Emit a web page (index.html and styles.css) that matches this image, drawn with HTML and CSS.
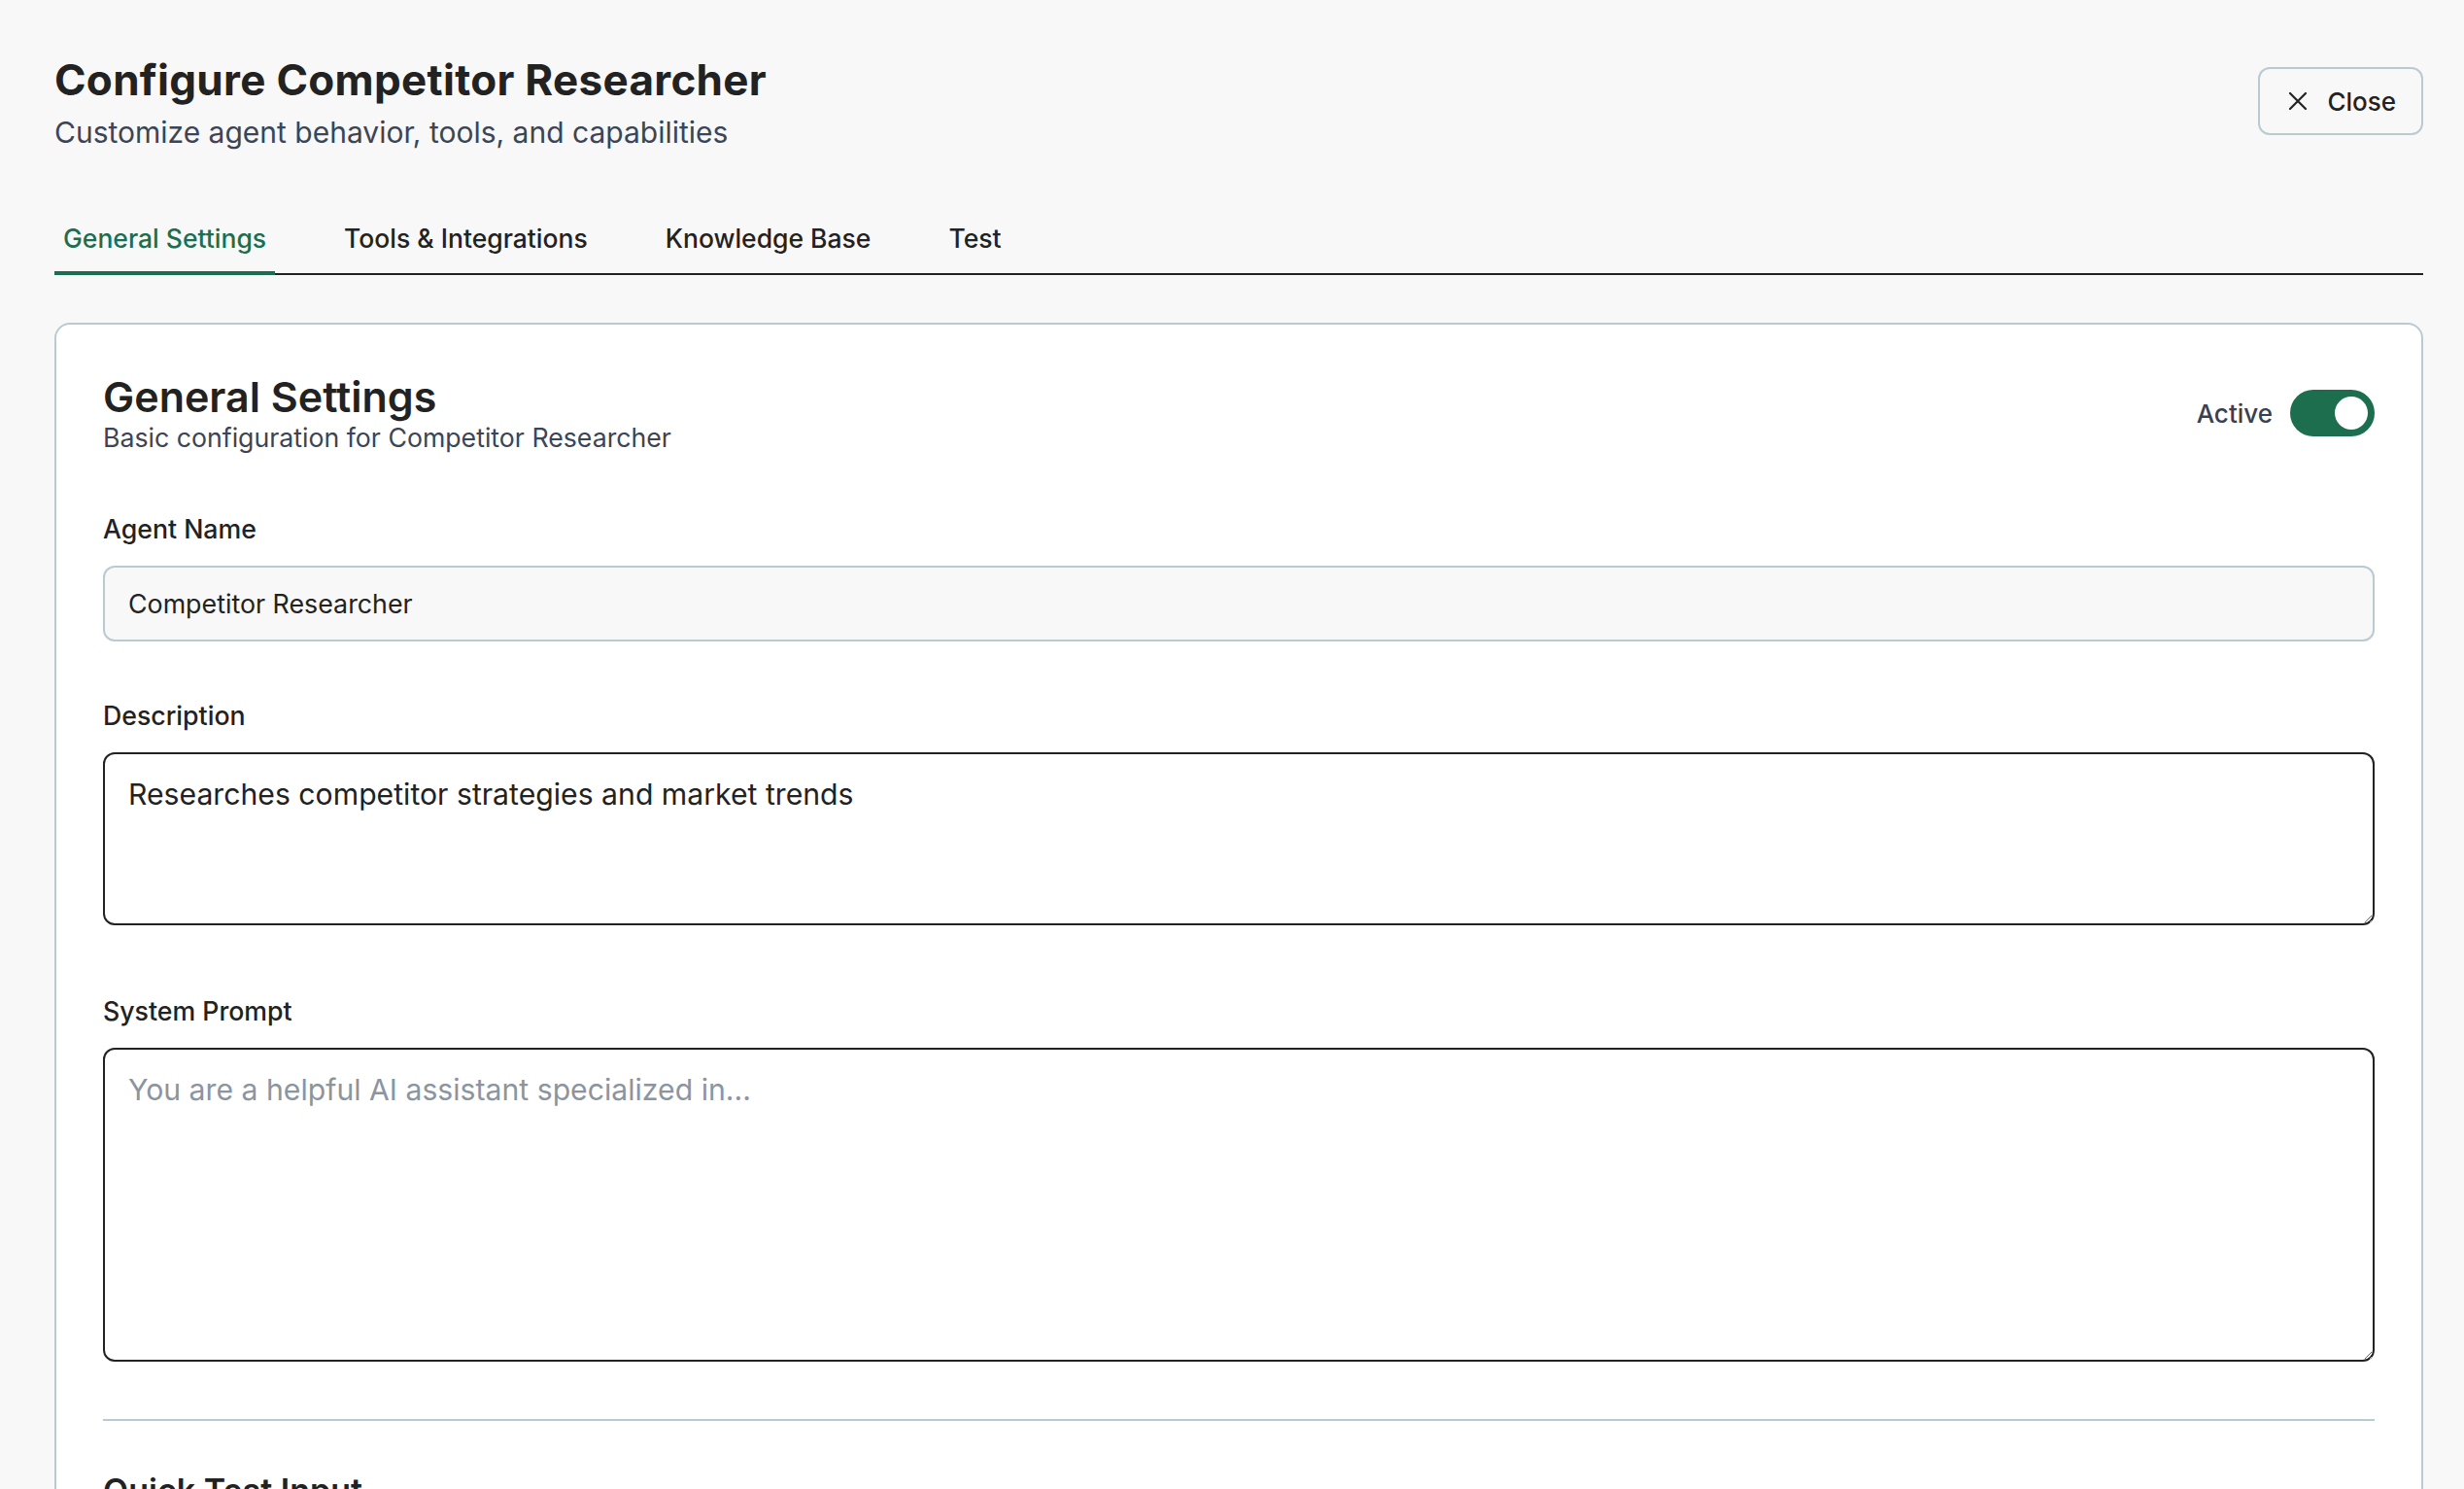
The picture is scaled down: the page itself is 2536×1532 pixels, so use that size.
FILE: index.html
```html
<!DOCTYPE html>
<html lang="en">
<head>
<meta charset="utf-8">
<title>Configure Competitor Researcher</title>
<link rel="stylesheet" href="styles.css">
</head>
<body>
<div class="page">
  <header class="page-header">
    <div class="titles">
      <h1 class="page-title">Configure Competitor Researcher</h1>
      <p class="page-subtitle">Customize agent behavior, tools, and capabilities</p>
    </div>
    <button class="close-btn" type="button">
      <svg class="close-icon" viewBox="0 0 20 20" width="20" height="20" aria-hidden="true">
        <path d="M2 2 L18 18 M18 2 L2 18" fill="none" stroke="#222" stroke-width="2.2" stroke-linecap="round"/>
      </svg>
      <span>Close</span>
    </button>
  </header>

  <nav class="tabs">
    <button class="tab tab-active" type="button">General Settings</button>
    <button class="tab" type="button">Tools &amp; Integrations</button>
    <button class="tab" type="button">Knowledge Base</button>
    <button class="tab" type="button">Test</button>
  </nav>

  <section class="card">
    <div class="card-header">
      <div>
        <h2 class="card-title">General Settings</h2>
        <p class="card-subtitle">Basic configuration for Competitor Researcher</p>
      </div>
      <div class="status">
        <span class="status-label">Active</span>
        <span class="toggle"><span class="knob"></span></span>
      </div>
    </div>

    <div class="field field-input">
      <label class="label">Agent Name</label>
      <input class="text-input" type="text" value="Competitor Researcher">
    </div>

    <div class="field field-area">
      <label class="label">Description</label>
      <textarea class="textarea desc">Researches competitor strategies and market trends</textarea>
    </div>

    <div class="field field-last">
      <label class="label">System Prompt</label>
      <textarea class="textarea prompt" placeholder="You are a helpful AI assistant specialized in..."></textarea>
    </div>

    <hr class="divider">

    <h3 class="section-title">Quick Test Input</h3>
    <textarea class="textarea desc" placeholder="Enter a test message..."></textarea>
  </section>
</div>
</body>
</html>
```

FILE: styles.css
```css
* {
  box-sizing: border-box;
}

html, body {
  margin: 0;
  padding: 0;
  background: #f8f8f8;
}

body {
  font-family: Inter, "Noto Sans", "Liberation Sans", sans-serif;
  color: #222222;
  overflow: hidden;
}

.page {
  padding: 56px 42px 0 56px;
}

.page-header {
  display: flex;
  justify-content: space-between;
  align-items: center;
}

.page-title {
  margin: 0;
  font-size: 44px;
  line-height: 52px;
  font-weight: 700;
  color: #222222;
  letter-spacing: 0.3px;
}

.page-subtitle {
  margin: 8px 0 0;
  font-size: 30px;
  line-height: 40px;
  font-weight: 400;
  color: #3b4556;
}

.close-btn {
  display: flex;
  align-items: center;
  gap: 20px;
  height: 70px;
  padding: 0 26px 0 29px;
  border: 2px solid #b9cad1;
  border-radius: 12px;
  background: #f8f8f8;
  font-family: inherit;
  font-size: 26px;
  font-weight: 500;
  color: #222222;
  margin-top: -4px;
}

.close-icon {
  width: 20px;
  height: 20px;
}

.tabs {
  display: flex;
  gap: 62px;
  margin-top: 57px;
  border-bottom: 2px solid #222222;
}

.tab {
  position: relative;
  padding: 16px 9px 20px;
  border: 0;
  background: transparent;
  font-family: inherit;
  font-size: 26.5px;
  line-height: 32px;
  font-weight: 500;
  color: #222222;
}

.tab-active {
  color: #1c6e4f;
}

.tab-active::after {
  content: "";
  position: absolute;
  left: 0;
  right: 0;
  bottom: -2px;
  height: 4px;
  background: #1c6e4f;
}

.card {
  margin-top: 49px;
  background: #ffffff;
  border: 2px solid #b9cad1;
  border-radius: 16px;
  padding: 48px 48px 200px;
}

.card-header {
  display: flex;
  justify-content: space-between;
  align-items: center;
  margin-bottom: 62px;
}

.card-title {
  margin: 0;
  font-size: 43px;
  line-height: 52px;
  font-weight: 600;
  color: #222222;
}

.card-subtitle {
  margin: 0;
  font-size: 26.7px;
  line-height: 32px;
  color: #3b4556;
}

.status {
  display: flex;
  align-items: center;
  gap: 18px;
  margin-top: 2px;
}

.status-label {
  font-size: 26px;
  font-weight: 500;
  color: #374151;
}

.toggle {
  display: flex;
  align-items: center;
  justify-content: flex-end;
  width: 87px;
  height: 48px;
  padding: 0 7px;
  border-radius: 24px;
  background: #1c6e4f;
}

.knob {
  width: 34px;
  height: 34px;
  border-radius: 50%;
  background: #ffffff;
}

.field-input {
  margin-bottom: 60px;
}

.field-area {
  margin-bottom: 72px;
}

.field-last {
  margin-bottom: 59px;
}

.label {
  display: block;
  margin-bottom: 22px;
  font-size: 26.7px;
  line-height: 32px;
  font-weight: 500;
  color: #222222;
}

.text-input {
  display: block;
  width: 100%;
  height: 78px;
  padding: 0 24px;
  border: 2px solid #b9cad1;
  border-radius: 12px;
  background: #f8f8f8;
  font-family: inherit;
  font-size: 26.8px;
  color: #222222;
  outline: none;
}

.textarea {
  display: block;
  width: 100%;
  padding: 20px 24px;
  border: 2px solid #222222;
  border-radius: 12px;
  background: #ffffff;
  font-family: inherit;
  font-size: 30.2px;
  line-height: 42px;
  color: #222222;
  resize: vertical;
  outline: none;
}

.textarea::placeholder {
  color: #8b95a1;
}

.desc {
  height: 178px;
}

.prompt {
  height: 323px;
}

.divider {
  margin: 0 0 50px;
  border: 0;
  height: 2px;
  background: #b9cad1;
}

.section-title {
  margin: 0 0 22px;
  font-size: 34px;
  line-height: 44px;
  font-weight: 600;
  color: #222222;
}
```
